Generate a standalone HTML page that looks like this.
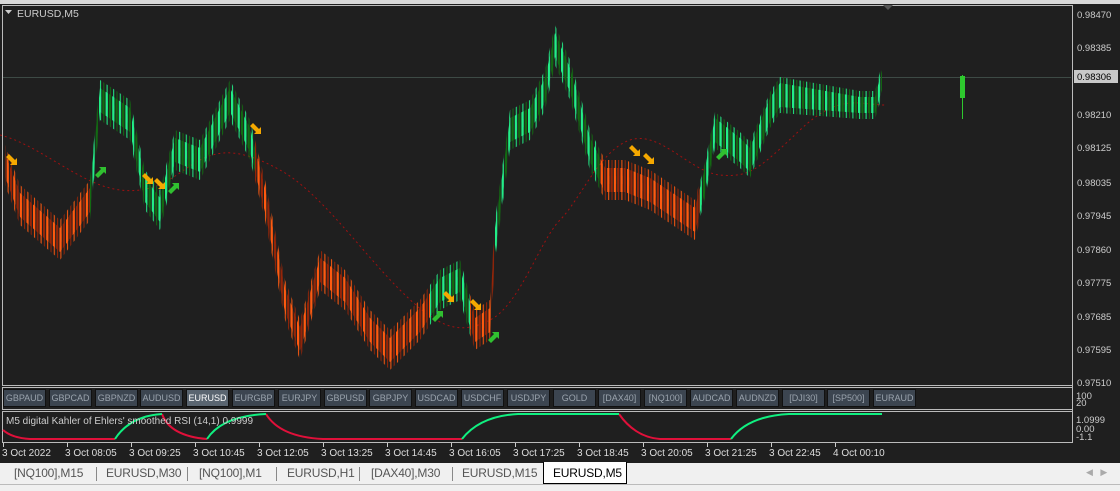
<!DOCTYPE html>
<html><head><meta charset="utf-8"><style>
*{margin:0;padding:0;box-sizing:border-box}
body{width:1120px;height:491px;background:#1f1f1f;overflow:hidden;font-family:"Liberation Sans",sans-serif;position:relative}
.btn{position:absolute;top:389px;height:18px;width:43px;background:#3c4550;border:1px solid #111;color:#9aa3ad;font-size:9px;text-align:center;line-height:16px}
.tab{position:absolute;top:466px;font-size:12px;color:#555;letter-spacing:-0.2px}
.sep{position:absolute;top:467px;width:1px;height:14px;background:#888}
</style></head><body>
<div style="position:absolute;left:0;top:0;width:1120px;height:4px;background:#d8d8d8"></div>
<svg width="1120" height="491" style="position:absolute;left:0;top:0" font-family="Liberation Sans" font-size="10">
<defs>
<pattern id="pg" patternUnits="userSpaceOnUse" width="6.6" height="10"><rect x="0" y="0" width="2.2" height="10" fill="#22ee88"/><rect x="3.3" y="0" width="2.2" height="10" fill="#126a12"/></pattern>
<pattern id="pr" patternUnits="userSpaceOnUse" width="6.6" height="10"><rect x="0" y="0" width="2.2" height="10" fill="#ff5a10"/><rect x="3.3" y="0" width="2.2" height="10" fill="#952508"/></pattern>
<pattern id="wg" patternUnits="userSpaceOnUse" width="6.6" height="10"><rect x="1" y="0" width="1" height="10" fill="#22ee88"/><rect x="4.3" y="0" width="1" height="10" fill="#126a12"/></pattern>
<pattern id="wr" patternUnits="userSpaceOnUse" width="6.6" height="10"><rect x="1" y="0" width="1" height="10" fill="#ff5a10"/><rect x="4.3" y="0" width="1" height="10" fill="#952508"/></pattern>
<polygon id="r1" points="5,153 20,193 60,228 90,188 90,212 60,252 20,217 5,177"/>
<polygon id="g1" points="90,188 100,88 130,108 145,178 160,198 175,138 200,148 230,88 250,128 255,148 255,172 250,152 230,112 200,172 175,162 160,222 145,202 130,132 100,112 90,212"/>
<polygon id="r2" points="255,148 265,188 285,288 300,328 320,258 345,278 370,318 390,338 420,308 430,293 430,317 420,332 390,362 370,342 345,302 320,282 300,352 285,312 265,212 255,172"/>
<polygon id="g2" points="430,293 440,278 460,268 470,303 470,327 460,292 440,302 430,317"/>
<polygon id="r3" points="470,303 475,318 490,308 495,228 495,252 490,332 475,342 470,327"/>
<polygon id="g3" points="495,228 510,118 530,108 545,78 555,33 570,68 590,138 600,158 600,182 590,162 570,92 555,57 545,102 530,132 510,142 495,252"/>
<polygon id="r4" points="600,158 605,168 625,168 650,178 680,198 695,208 700,188 700,212 695,232 680,222 650,202 625,192 605,192 600,182"/>
<polygon id="g4" points="700,188 705,168 715,118 740,138 750,148 770,98 780,83 820,90 860,97 875,97 882,70 882,90 875,113 860,113 820,110 780,107 770,122 750,172 740,162 715,142 705,192 700,212"/>
</defs>
<rect x="2.5" y="5.5" width="1070" height="380" fill="none" stroke="#bbb"/>
<rect x="2.5" y="387.5" width="1070" height="22" fill="none" stroke="#bbb"/>
<rect x="2.5" y="411.5" width="1070" height="31" fill="none" stroke="#bbb"/>
<line x1="1072.5" y1="5" x2="1072.5" y2="443" stroke="#bbb"/>
<line x1="3" y1="77.5" x2="1071" y2="77.5" stroke="#3d4a45"/>
<polygon points="883,5 893,5 888,10" fill="#555"/>
<polygon points="5,10 12,10 8.5,14" fill="#ccc"/>
<text x="17" y="17" fill="#ccc" font-size="10.5">EURUSD,M5</text>
<path d="M0,135 C40,145 80,185 120,190 S180,170 200,160 S240,148 280,170 S360,250 400,290 S460,335 490,320 S540,240 560,220 S600,150 630,140 S690,172 720,175 S760,168 800,130 S860,105 885,105" fill="none" stroke="#a01010" stroke-dasharray="2,3"/>
<g>
<use href="#r1" fill="url(#wr)" transform="translate(0,-8)"/><use href="#r1" fill="url(#wr)" transform="translate(0,8)"/><use href="#r1" fill="url(#pr)"/>
<use href="#r2" fill="url(#wr)" transform="translate(0,-8)"/><use href="#r2" fill="url(#wr)" transform="translate(0,8)"/><use href="#r2" fill="url(#pr)"/>
<use href="#r3" fill="url(#wr)" transform="translate(0,-8)"/><use href="#r3" fill="url(#wr)" transform="translate(0,8)"/><use href="#r3" fill="url(#pr)"/>
<use href="#r4" fill="url(#wr)" transform="translate(0,-8)"/><use href="#r4" fill="url(#wr)" transform="translate(0,8)"/><use href="#r4" fill="url(#pr)"/>
<use href="#g1" fill="url(#wg)" transform="translate(0,-8)"/><use href="#g1" fill="url(#wg)" transform="translate(0,8)"/><use href="#g1" fill="url(#pg)"/>
<use href="#g2" fill="url(#wg)" transform="translate(0,-8)"/><use href="#g2" fill="url(#wg)" transform="translate(0,8)"/><use href="#g2" fill="url(#pg)"/>
<use href="#g3" fill="url(#wg)" transform="translate(0,-8)"/><use href="#g3" fill="url(#wg)" transform="translate(0,8)"/><use href="#g3" fill="url(#pg)"/>
<use href="#g4" fill="url(#wg)" transform="translate(0,-6)"/><use href="#g4" fill="url(#wg)" transform="translate(0,6)"/><use href="#g4" fill="url(#pg)"/>
</g>
<line x1="962.5" y1="75" x2="962.5" y2="119" stroke="#2ec82e"/><rect x="960" y="76" width="5" height="22" fill="#2ec82e"/>
<g fill="#f5a800">
<path transform="translate(6,157)" d="M0,0 l3,-3 l6,6 l2,-2 v7 h-7 l2,-2z"/>
<path transform="translate(142,176)" d="M0,0 l3,-3 l6,6 l2,-2 v7 h-7 l2,-2z"/>
<path transform="translate(154,181)" d="M0,0 l3,-3 l6,6 l2,-2 v7 h-7 l2,-2z"/>
<path transform="translate(250,126)" d="M0,0 l3,-3 l6,6 l2,-2 v7 h-7 l2,-2z"/>
<path transform="translate(443,294)" d="M0,0 l3,-3 l6,6 l2,-2 v7 h-7 l2,-2z"/>
<path transform="translate(470,302)" d="M0,0 l3,-3 l6,6 l2,-2 v7 h-7 l2,-2z"/>
<path transform="translate(629,148)" d="M0,0 l3,-3 l6,6 l2,-2 v7 h-7 l2,-2z"/>
<path transform="translate(643,156)" d="M0,0 l3,-3 l6,6 l2,-2 v7 h-7 l2,-2z"/>
</g>
<g fill="#30c030">
<path transform="translate(98,168)" d="M0,10 l-3,-3 l6,-6 l-2,-2 h7 v7 l-2,-2z"/>
<path transform="translate(171,184)" d="M0,10 l-3,-3 l6,-6 l-2,-2 h7 v7 l-2,-2z"/>
<path transform="translate(435,312)" d="M0,10 l-3,-3 l6,-6 l-2,-2 h7 v7 l-2,-2z"/>
<path transform="translate(491,333)" d="M0,10 l-3,-3 l6,-6 l-2,-2 h7 v7 l-2,-2z"/>
<path transform="translate(719,150)" d="M0,10 l-3,-3 l6,-6 l-2,-2 h7 v7 l-2,-2z"/>
</g>
<g fill="#ccc" font-size="9.5">
<text x="1077" y="18">0.98470</text><text x="1077" y="51">0.98385</text>
<text x="1077" y="118">0.98210</text><text x="1077" y="151">0.98125</text><text x="1077" y="186">0.98035</text><text x="1077" y="219">0.97945</text><text x="1077" y="253">0.97860</text><text x="1077" y="286">0.97775</text><text x="1077" y="320">0.97685</text><text x="1077" y="353">0.97595</text><text x="1077" y="386">0.97510</text>
<text x="1076" y="399">100</text><text x="1076" y="406">20</text>
<text x="1076" y="423">1.0999</text><text x="1076" y="432">0.00</text><text x="1076" y="440">-1.1</text>
</g>
<rect x="1074" y="70" width="44" height="13" fill="#c8c8c8"/>
<text x="1077" y="80" fill="#000" font-size="9.5">0.98306</text>
<g fill="none" stroke-width="2">
<path d="M3,430 Q12,438 30,439 L115,439 M162,414 Q170,436 207,439 M266,414 Q280,437 323,439 L462,439 M619,414 Q635,437 660,439 L731,439" stroke="#e0103a"/>
<path d="M115,439 Q130,416 162,414 M207,439 Q222,416 266,414 M462,439 Q480,416 518,414 L619,414 M731,439 Q748,416 789,414 L882,414" stroke="#10f080"/>
</g>
<text x="6" y="424" fill="#ccc" font-size="10">M5 digital Kahler of Ehlers' smoothed RSI  (14,1) 0.9999</text>
<g stroke="#ccc"><line x1="3.5" y1="443" x2="3.5" y2="447"/><line x1="67.5" y1="443" x2="67.5" y2="447"/><line x1="131.5" y1="443" x2="131.5" y2="447"/><line x1="195.5" y1="443" x2="195.5" y2="447"/><line x1="259.5" y1="443" x2="259.5" y2="447"/><line x1="323.5" y1="443" x2="323.5" y2="447"/><line x1="387.5" y1="443" x2="387.5" y2="447"/><line x1="451.5" y1="443" x2="451.5" y2="447"/><line x1="515.5" y1="443" x2="515.5" y2="447"/><line x1="579.5" y1="443" x2="579.5" y2="447"/><line x1="643.5" y1="443" x2="643.5" y2="447"/><line x1="707.5" y1="443" x2="707.5" y2="447"/><line x1="771.5" y1="443" x2="771.5" y2="447"/><line x1="835.5" y1="443" x2="835.5" y2="447"/></g>
<g fill="#ddd" font-size="10">
<text x="2" y="456">3 Oct 2022</text><text x="65" y="456">3 Oct 08:05</text><text x="129" y="456">3 Oct 09:25</text><text x="193" y="456">3 Oct 10:45</text><text x="257" y="456">3 Oct 12:05</text><text x="321" y="456">3 Oct 13:25</text><text x="385" y="456">3 Oct 14:45</text><text x="449" y="456">3 Oct 16:05</text><text x="513" y="456">3 Oct 17:25</text><text x="577" y="456">3 Oct 18:45</text><text x="641" y="456">3 Oct 20:05</text><text x="705" y="456">3 Oct 21:25</text><text x="769" y="456">3 Oct 22:45</text><text x="833" y="456">4 Oct 00:10</text>
</g>
</svg>
<div class="btn" style="left:3px">GBPAUD</div>
<div class="btn" style="left:49px">GBPCAD</div>
<div class="btn" style="left:95px">GBPNZD</div>
<div class="btn" style="left:140px">AUDUSD</div>
<div class="btn" style="left:186px;background:#5a6570;color:#fff">EURUSD</div>
<div class="btn" style="left:232px">EURGBP</div>
<div class="btn" style="left:278px">EURJPY</div>
<div class="btn" style="left:324px">GBPUSD</div>
<div class="btn" style="left:369px">GBPJPY</div>
<div class="btn" style="left:415px">USDCAD</div>
<div class="btn" style="left:461px">USDCHF</div>
<div class="btn" style="left:507px">USDJPY</div>
<div class="btn" style="left:553px">GOLD</div>
<div class="btn" style="left:598px">[DAX40]</div>
<div class="btn" style="left:644px">[NQ100]</div>
<div class="btn" style="left:690px">AUDCAD</div>
<div class="btn" style="left:736px">AUDNZD</div>
<div class="btn" style="left:782px">[DJI30]</div>
<div class="btn" style="left:827px">[SP500]</div>
<div class="btn" style="left:873px">EURAUD</div>
<div style="position:absolute;left:0;top:463px;width:1120px;height:21px;background:#f0f0f0"></div>
<div style="position:absolute;left:0;top:484px;width:1120px;height:7px;background:#f0f0f0;border-top:1px solid #bbb"></div>
<div style="position:absolute;left:543px;top:462px;width:84px;height:22px;background:#fff;border:1px solid #000;border-top:none"></div>
<div class="tab" style="left:14px">[NQ100],M15</div>
<div class="tab" style="left:106px">EURUSD,M30</div>
<div class="tab" style="left:199px">[NQ100],M1</div>
<div class="tab" style="left:287px">EURUSD,H1</div>
<div class="tab" style="left:371px">[DAX40],M30</div>
<div class="tab" style="left:462px">EURUSD,M15</div>
<div class="tab" style="left:553px;color:#000">EURUSD,M5</div>
<div class="sep" style="left:96px"></div>
<div class="sep" style="left:187px"></div>
<div class="sep" style="left:276px"></div>
<div class="sep" style="left:359px"></div>
<div class="sep" style="left:452px"></div>
<div style="position:absolute;left:1086px;top:467px;color:#aaa;font-size:9px">◀ &nbsp; ▶</div>
</body></html>
